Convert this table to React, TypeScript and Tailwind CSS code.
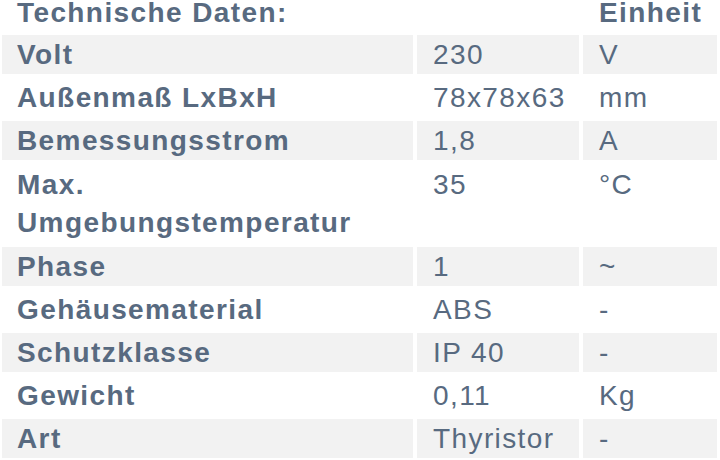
const rows: { label: React.ReactNode; value: string; unit: string; tall?: boolean }[] = [
  { label: "Volt", value: "230", unit: "V" },
  { label: "Außenmaß LxBxH", value: "78x78x63", unit: "mm" },
  { label: "Bemessungsstrom", value: "1,8", unit: "A" },
  {
    label: (
      <>
        Max.
        <br />
        Umgebungstemperatur
      </>
    ),
    value: "35",
    unit: "°C",
    tall: true,
  },
  { label: "Phase", value: "1", unit: "~" },
  { label: "Gehäusematerial", value: "ABS", unit: "-" },
  { label: "Schutzklasse", value: "IP 40", unit: "-" },
  { label: "Gewicht", value: "0,11", unit: "Kg" },
  { label: "Art", value: "Thyristor", unit: "-" },
];

const App = () => {
  return (
    <div className="w-[720px] h-[460px] overflow-hidden bg-white font-['Liberation_Sans',Arial,sans-serif] text-[28px] tracking-[1.4px] text-[#586a80]">
      <div className="ml-[2px] grid grid-cols-[411px_162px_134px] gap-[4px]">
        {/* Kopfzeile */}
        <div className="h-[31px] pl-[15px] font-bold leading-[26px]">Technische Daten:</div>
        <div className="h-[31px]" />
        <div className="h-[31px] pl-[16px] font-bold leading-[26px]">Einheit</div>

        {rows.map((row, i) => {
          const bg = i % 2 === 0 ? "bg-[#f2f2f2]" : "bg-white";
          const h = row.tall ? "h-[79px] pt-[2px]" : "h-[39px] pt-[1px]";
          return (
            <div key={i} className="contents">
              <div className={`${bg} ${h} pl-[15px] font-bold leading-[38px]`}>{row.label}</div>
              <div className={`${bg} ${h} pl-[16px] leading-[38px]`}>{row.value}</div>
              <div className={`${bg} ${h} pl-[16px] leading-[38px]`}>{row.unit}</div>
            </div>
          );
        })}
      </div>
    </div>
  );
};

export default App;
